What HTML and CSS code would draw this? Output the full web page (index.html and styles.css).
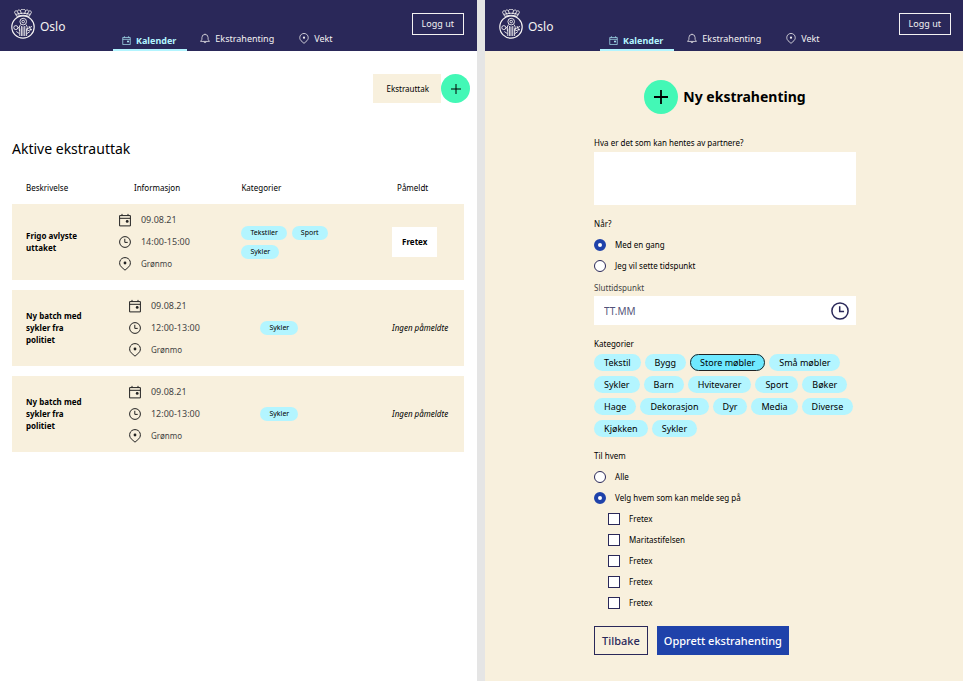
FILE: index.html
```
<!DOCTYPE html>
<html lang="nb">
<head>
<meta charset="utf-8">
<title>Oslo – Ekstrahenting</title>
<link rel="stylesheet" href="styles.css">
</head>
<body>
<svg class="sprite" aria-hidden="true">
  <symbol id="calendar" viewBox="0 0 12 13">
    <path d="M.6 2.1h10.8v10.3H.6zM.6 4.8h10.8M3 .4v1.7M9 .4v1.7" fill="none" stroke="currentColor"/>
    <circle cx="8.2" cy="7.9" r="1.4" fill="currentColor"/>
  </symbol>
  <symbol id="clock" viewBox="0 0 12 12">
    <circle cx="6" cy="6" r="5.4" fill="none" stroke="currentColor"/>
    <path d="M5.8 2.8v3.6h2.9" fill="none" stroke="currentColor"/>
  </symbol>
  <symbol id="pin" viewBox="0 0 12 14">
    <path d="M6 13.2 2.200 9.800C-1 6.600.9.600 6 .600s7 6 3.800 9.200z" fill="none" stroke="currentColor"/>
    <circle cx="6" cy="6" r="1.4" fill="currentColor"/>
  </symbol>
  <symbol id="bell" viewBox="0 0 12 12">
    <path d="M.7 9.500h10.600L9.700 7V4.800a3.700 3.700 0 0 0-7.400 0V7zM4.800 9.700a1.200 1.400 0 0 0 2.400 0M6 1.100V.2" fill="none" stroke="currentColor" stroke-width=".9"/>
  </symbol>
  <symbol id="plus" viewBox="0 0 14 14">
    <path d="M7 0v14M0 7h14" fill="none" stroke="currentColor"/>
  </symbol>
  <symbol id="crest" viewBox="0 0 24 30">
    <g fill="none" stroke="currentColor" stroke-width=".9">
      <circle cx="12" cy="18" r="11.200" stroke-width="1.200"/>
      <path d="M5.800 7.400 3.600 3.400M18.200 7.400l2.200-4M5.800 7.400c4-1.500 8.400-1.500 12.400 0M5 5.400c4.500-1.600 9.500-1.600 14 0"/>
      <path d="M3.600 3.400a1.500 1.500 0 0 1 2.800-.8 1.600 1.600 0 0 1 3-.8 2.700 2.300 0 0 1 5.200 0 1.600 1.600 0 0 1 3 .8 1.500 1.500 0 0 1 2.800.8M6.500 2.800l1.700 3M17.500 2.800l-1.700 3M9.500 2l1 3M14.500 2l-1 3"/>
      <circle cx="12.200" cy="12.600" r="3.300"/>
      <circle cx="12.200" cy="12.600" r="1.300"/>
      <circle cx="4.800" cy="18.600" r="2"/>
      <path d="M9.500 15.600c-1.500 2-1.500 4-1 6.500M15 15.600c1.500 2 1.500 4 1 6.500M10.600 17v10M13.800 17v10M8.800 27v-7.500M15.600 27v-7.500M6.800 19.200 9 17.600M15.500 20.200l5.500-2.800M17 21.700l4-1.500M18 17l2 4.500M5.300 22.500l3.200 2.200M15.800 24.700l3.200-2.200"/>
    </g>
    <path d="M10.800 17.500h2.800V27h-2.800z" fill="currentColor" opacity=".45"/>
  </symbol>
</svg>

<div class="screens">
  <section class="screen list-screen">
    <header class="topbar">
      <a class="brand" href="#"><svg class="crest"><use href="#crest"/></svg>Oslo</a>
      <nav class="tabs">
        <a class="tab active" href="#"><svg class="tab-icon small"><use href="#calendar"/></svg>Kalender</a>
        <a class="tab" href="#"><svg class="tab-icon"><use href="#bell"/></svg>Ekstrahenting</a>
        <a class="tab" href="#"><svg class="tab-icon"><use href="#pin"/></svg>Vekt</a>
      </nav>
      <button class="logout" type="button">Logg ut</button>
    </header>
    <main class="list">
      <div class="add">
        <span class="add-label" id="add-label">Ekstrauttak</span>
        <button class="round" type="button" aria-labelledby="add-label"><svg class="plus"><use href="#plus"/></svg></button>
      </div>
      <h1>Aktive ekstrauttak</h1>
      <table class="pickups">
        <colgroup><col class="c-desc"><col class="c-info"><col class="c-cat"><col class="c-who"></colgroup>
        <thead>
          <tr><th>Beskrivelse</th><th>Informasjon</th><th>Kategorier</th><th>Påmeldt</th></tr>
        </thead>
        <tbody>
          <tr>
            <td class="desc">Frigo avlyste uttaket</td>
            <td class="info"><ul class="facts">
              <li><svg class="fact-icon"><use href="#calendar"/></svg><time>09.08.21</time></li>
              <li><svg class="fact-icon"><use href="#clock"/></svg><time>14:00-15:00</time></li>
              <li><svg class="fact-icon"><use href="#pin"/></svg>Grønmo</li>
            </ul></td>
            <td class="cats"><div class="tags"><span class="tag">Tekstiler</span><span class="tag">Sport</span><span class="tag">Sykler</span></div></td>
            <td class="who"><span class="partner">Fretex</span></td>
          </tr>
          <tr class="open">
            <td class="desc">Ny batch med sykler fra politiet</td>
            <td class="info"><ul class="facts">
              <li><svg class="fact-icon"><use href="#calendar"/></svg><time>09.08.21</time></li>
              <li><svg class="fact-icon"><use href="#clock"/></svg><time>12:00-13:00</time></li>
              <li><svg class="fact-icon"><use href="#pin"/></svg>Grønmo</li>
            </ul></td>
            <td class="cats"><div class="tags"><span class="tag">Sykler</span></div></td>
            <td class="who"><em>Ingen påmeldte</em></td>
          </tr>
          <tr class="open">
            <td class="desc">Ny batch med sykler fra politiet</td>
            <td class="info"><ul class="facts">
              <li><svg class="fact-icon"><use href="#calendar"/></svg><time>09.08.21</time></li>
              <li><svg class="fact-icon"><use href="#clock"/></svg><time>12:00-13:00</time></li>
              <li><svg class="fact-icon"><use href="#pin"/></svg>Grønmo</li>
            </ul></td>
            <td class="cats"><div class="tags"><span class="tag">Sykler</span></div></td>
            <td class="who"><em>Ingen påmeldte</em></td>
          </tr>
        </tbody>
      </table>
    </main>
  </section>

  <section class="screen form-screen">
    <header class="topbar">
      <a class="brand" href="#"><svg class="crest"><use href="#crest"/></svg>Oslo</a>
      <nav class="tabs">
        <a class="tab active" href="#"><svg class="tab-icon small"><use href="#calendar"/></svg>Kalender</a>
        <a class="tab" href="#"><svg class="tab-icon"><use href="#bell"/></svg>Ekstrahenting</a>
        <a class="tab" href="#"><svg class="tab-icon"><use href="#pin"/></svg>Vekt</a>
      </nav>
      <button class="logout" type="button">Logg ut</button>
    </header>
    <main class="create">
      <form class="form">
        <h2><span class="round"><svg class="plus"><use href="#plus"/></svg></span>Ny ekstrahenting</h2>
        <label class="caption" for="what">Hva er det som kan hentes av partnere?</label>
        <textarea id="what"></textarea>

        <fieldset class="when">
          <legend class="caption">Når?</legend>
          <label class="option"><input type="radio" name="when" checked>Med en gang</label>
          <label class="option"><input type="radio" name="when">Jeg vil sette tidspunkt</label>
        </fieldset>

        <label class="caption muted" for="end">Sluttidspunkt</label>
        <div class="time-field">
          <input id="end" type="text" placeholder="TT.MM">
          <svg class="time-icon"><use href="#clock"/></svg>
        </div>

        <fieldset class="categories">
          <legend class="caption">Kategorier</legend>
          <div class="chips">
            <button class="chip" type="button">Tekstil</button>
            <button class="chip" type="button">Bygg</button>
            <button class="chip selected" type="button" aria-pressed="true">Store møbler</button>
            <button class="chip" type="button">Små møbler</button>
            <button class="chip" type="button">Sykler</button>
            <button class="chip" type="button">Barn</button>
            <button class="chip" type="button">Hvitevarer</button>
            <button class="chip" type="button">Sport</button>
            <button class="chip" type="button">Bøker</button>
            <button class="chip" type="button">Hage</button>
            <button class="chip" type="button">Dekorasjon</button>
            <button class="chip" type="button">Dyr</button>
            <button class="chip" type="button">Media</button>
            <button class="chip" type="button">Diverse</button>
            <button class="chip" type="button">Kjøkken</button>
            <button class="chip" type="button">Sykler</button>
          </div>
        </fieldset>

        <fieldset class="whom">
          <legend class="caption">Til hvem</legend>
          <label class="option"><input type="radio" name="whom">Alle</label>
          <label class="option"><input type="radio" name="whom" checked>Velg hvem som kan melde seg på</label>
          <div class="partners">
            <label class="option"><input type="checkbox">Fretex</label>
            <label class="option"><input type="checkbox">Maritastifelsen</label>
            <label class="option"><input type="checkbox">Fretex</label>
            <label class="option"><input type="checkbox">Fretex</label>
            <label class="option"><input type="checkbox">Fretex</label>
          </div>
        </fieldset>

        <div class="actions">
          <button class="btn outline" type="button">Tilbake</button>
          <button class="btn primary" type="submit">Opprett ekstrahenting</button>
        </div>
      </form>
    </main>
  </section>
</div>
</body>
</html>
```
FILE: styles.css
```
:root {
  --navy: #2a2859;
  --beige: #f8f0dd;
  --sky: #b3f5ff;
  --green: #43f8b6;
  --blue: #1f42aa;
}

* { box-sizing: border-box; }

body {
  margin: 0;
  background: #e5e5e5;
  color: #000;
  font: 8px/12px "Noto Sans", sans-serif;
}

button, input, textarea { font: inherit; color: inherit; margin: 0; }
a { color: inherit; text-decoration: none; }
svg { display: block; flex: none; }
.sprite { position: absolute; width: 0; height: 0; }

.screens {
  display: grid;
  grid-template-columns: 477fr 478fr;
  gap: 8px;
  min-height: 100vh;
}
.screen { background: #fff; min-width: 0; }
.form-screen { background: var(--beige); }

/* Top bar */
.topbar {
  display: flex;
  align-items: stretch;
  height: 51px;
  padding: 0 13px 0 11px;
  background: var(--navy);
  color: #f4f2f2;
}
.form-screen .topbar { padding: 0 12px 0 14px; }
.brand {
  display: flex;
  align-items: flex-end;
  gap: 5px;
  width: 102px;
  padding-bottom: 12px;
  font-size: 12px;
  line-height: 24px;
}
.form-screen .brand { width: 101px; }
.crest { width: 24px; height: 30px; }
.tabs { display: flex; }
.tab {
  display: flex;
  align-items: center;
  gap: 5px;
  margin-left: 13px;
  padding: 26px 12px 0 0;
  font-size: 9px;
}
.tab.active {
  margin: 0;
  padding: 32px 11px 0 9px;
  gap: 5px;
  border-bottom: 2px solid var(--sky);
  color: var(--sky);
  font-weight: 700;
}
.tab-icon { width: 10px; height: 11px; }
.tab-icon.small { width: 9px; height: 9px; }
.logout {
  align-self: flex-start;
  height: 22px;
  margin: 13px 0 0 auto;
  padding: 0 9px;
  border: 1px solid #f4f2f2;
  background: none;
  font-size: 9px;
  line-height: 16px;
}

/* List screen */
.list { padding: 23px 13px 0 12px; }
.add {
  display: flex;
  justify-content: flex-end;
  align-items: center;
  margin-right: -6px;
}
.add-label {
  padding: 9px 12px 8px 13px;
  background: var(--beige);
}
.round {
  display: grid;
  place-items: center;
  width: 30px;
  height: 30px;
  padding: 0;
  border: 0;
  border-radius: 50%;
  background: var(--green);
}
.add .round { width: 29px; height: 29px; }
.plus { width: 10px; height: 10px; stroke-width: 1.4px; }
h1 {
  margin: 36px 0 0;
  font-size: 14px;
  font-weight: 400;
  line-height: 20px;
}
.pickups {
  width: 100%;
  margin-top: 13px;
  border-spacing: 0 10px;
  table-layout: fixed;
}
.c-desc { width: 23%; }
.c-info { width: 24%; }
.c-cat { width: 32%; }
th {
  padding: 0 0 0 14px;
  font-weight: 400;
  text-align: left;
}
th:nth-child(2) { padding-left: 18px; }
th:nth-child(3) { padding-left: 17px; }
th:nth-child(4) { padding-left: 28px; }
td { height: 76px; padding: 0; background: var(--beige); }
.desc { padding: 0 26px 0 14px; font-weight: 700; }
.info { padding-left: 3px; }
.open .info { padding-left: 13px; }
.cats { padding-left: 17px; }
.open .cats { padding-left: 36px; }
.who { padding-left: 23px; white-space: nowrap; }
.facts {
  display: grid;
  gap: 8px;
  margin: 0;
  padding: 0;
  list-style: none;
  color: #444;
}
.facts li { display: flex; align-items: center; gap: 10px; height: 14px; }
.facts time { font-size: 9px; }
.fact-icon { width: 12px; height: 14px; color: #222; }
.tags { display: flex; flex-wrap: wrap; gap: 5px; width: 100px; }
.tag {
  padding: 1px 9px;
  border-radius: 7px;
  background: var(--sky);
  font-size: 7px;
}
.partner {
  display: inline-block;
  padding: 9px 10px;
  background: #fff;
  font-weight: 700;
}

/* Form screen */
.create { padding-left: 2px; }
.form { width: 55%; margin: 0 auto; padding-top: 29px; }
h2 {
  display: flex;
  justify-content: center;
  align-items: center;
  gap: 5px;
  margin: 0 0 23px;
  font-size: 14px;
  line-height: 20px;
}
h2 .round { width: 34px; height: 34px; }
h2 .plus { width: 14px; height: 14px; stroke-width: 1.8px; }
.caption { display: block; padding: 0; }
.muted { color: #444; }
textarea {
  display: block;
  width: 100%;
  height: 53px;
  margin-top: 3px;
  padding: 8px 10px;
  border: 0;
  background: #fff;
  resize: none;
}
fieldset { min-width: 0; margin: 0; padding: 0; border: 0; }
.when { margin: 13px 0 10px; }
.option { display: flex; align-items: center; gap: 9px; height: 12px; margin-top: 9px; }
.option input {
  appearance: none;
  flex: none;
  width: 12px;
  height: 12px;
  border: 1px solid var(--navy);
  background: #fff;
}
.option input[type="radio"] { border-radius: 50%; }
.option input[type="radio"]:checked { border: 4px solid var(--blue); }
.time-field {
  display: flex;
  align-items: center;
  height: 29px;
  margin-top: 2px;
  padding: 0 7px 0 10px;
  background: #fff;
}
.time-field input {
  flex: 1;
  min-width: 0;
  padding: 0;
  border: 0;
  background: none;
  font-size: 10px;
}
.time-field input::placeholder { color: var(--navy); opacity: .8; }
.time-icon { width: 18px; height: 18px; color: var(--navy); }
.categories { margin-top: 13px; }
.chips { display: flex; flex-wrap: wrap; gap: 5px 4px; margin: 4px -5px 0 0; }
.chip {
  height: 17px;
  padding: 0 10px;
  border: 0;
  border-radius: 9px;
  background: var(--sky);
  font-size: 9px;
}
.chip.selected { background: #6fe9ff; outline: 1px solid #222; outline-offset: -1px; }
.whom { margin-top: 13px; }
.partners { margin-left: 14px; }
.actions { display: flex; gap: 9px; margin-top: 17px; }
.btn {
  height: 29px;
  padding: 0 7px;
  border: 0;
  font-size: 11px;
  font-weight: 500;
}
.btn.outline { border: 1px solid var(--navy); background: none; color: var(--navy); }
.btn.primary { background: var(--blue); color: #fff; }
```
